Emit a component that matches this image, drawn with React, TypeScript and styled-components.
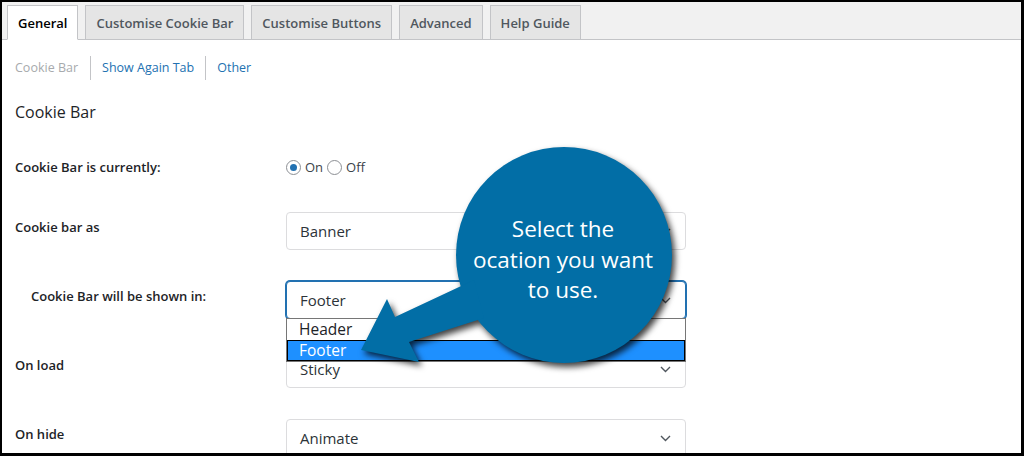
import React from "react";
import styled, { createGlobalStyle } from "styled-components";

const GlobalStyle = createGlobalStyle`
  html, body { margin: 0; padding: 0; background: #000; }
  body { font-family: "Open Sans", "Noto Sans", sans-serif; }
  * { box-sizing: border-box; }
`;

const Frame = styled.div`
  position: relative;
  width: 1024px;
  height: 456px;
  overflow: hidden;
  background: #fff;
  border-style: solid;
  border-color: #000;
  border-width: 2px 3px 3px 2px;
`;

const TabBar = styled.div`
  display: flex;
  align-items: flex-end;
  gap: 7px;
  height: 38px;
  padding-left: 5px;
  background: #f1f1f1;
  border-bottom: 1px solid #c3c4c7;
`;

const Tab = styled.div<{ $active?: boolean }>`
  height: 35px;
  margin-bottom: -1px;
  padding: 0 10px;
  display: flex;
  align-items: center;
  font-size: 13px;
  font-weight: 600;
  color: ${(p) => (p.$active ? "#000" : "#50575e")};
  background: ${(p) => (p.$active ? "#fff" : "#e5e5e5")};
  border: 1px solid #c3c4c7;
  border-bottom: 1px solid ${(p) => (p.$active ? "#fff" : "#c3c4c7")};
`;

const Content = styled.div`
  padding-left: 13px;
`;

const SubNav = styled.div`
  display: flex;
  align-items: center;
  margin-top: 16px;
  height: 24px;
  font-size: 12.5px;
`;

const SubLink = styled.span<{ $current?: boolean }>`
  color: ${(p) => (p.$current ? "#a7aaad" : "#2271b1")};
  padding: 0 11px;
  line-height: 24px;
  border-left: 1px solid #c3c4c7;
  &:first-child { padding-left: 0; padding-right: 12px; border-left: none; }
`;

const Heading = styled.h2`
  margin: 20px 0 13px;
  font-size: 16px;
  line-height: 24px;
  font-weight: 500;
  color: #1d2327;
`;

const Row = styled.div<{ $compact?: boolean }>`
  display: grid;
  grid-template-columns: 271px 400px;
  padding: ${(p) => (p.$compact ? "15px 0 15px" : "15px 0 16px")};
`;

const Label = styled.div<{ $indent?: boolean }>`
  padding-top: 5px;
  padding-left: ${(p) => (p.$indent ? "16px" : "0")};
  font-size: 13px;
  line-height: 20px;
  font-weight: 600;
  color: #1d2327;
`;

const RadioGroup = styled.div`
  display: flex;
  align-items: center;
  height: 30px;
  font-size: 13px;
  color: #3c434a;
`;

const RadioCircle = styled.span<{ $checked?: boolean }>`
  width: 15px;
  height: 15px;
  border-radius: 50%;
  border: 1px solid #8c8f94;
  display: inline-flex;
  align-items: center;
  justify-content: center;
  margin-right: 4px;
  &::after {
    content: "";
    width: 7px;
    height: 7px;
    border-radius: 50%;
    background: ${(p) => (p.$checked ? "#2271b1" : "transparent")};
  }
`;

const RadioText = styled.span`
  margin-right: 4px;
`;

const SelectBox = styled.div<{ $focused?: boolean }>`
  position: relative;
  height: 38px;
  display: flex;
  align-items: center;
  justify-content: space-between;
  padding: 0 14px 0 13px;
  font-size: 15px;
  color: #2c3338;
  background: #fff;
  border-radius: 4px;
  border: 1px solid ${(p) => (p.$focused ? "#2271b1" : "#dcdcde")};
  box-shadow: ${(p) => (p.$focused ? "0 0 0 1px #2271b1" : "none")};
`;

const Chevron = () => (
  <svg width="11" height="7" viewBox="0 0 11 7" fill="none">
    <path d="M1 1l4.5 4.5L10 1" stroke="#50575e" strokeWidth="1.4" />
  </svg>
);

const DropList = styled.div`
  position: absolute;
  left: 284px;
  top: 316px;
  width: 400px;
  background: #fff;
  border: 1px solid #767676;
  z-index: 2;
`;

const Option = styled.div<{ $selected?: boolean }>`
  height: 21px;
  font-size: 15.5px;
  color: ${(p) => (p.$selected ? "#fff" : "#1d2327")};
  background: ${(p) => (p.$selected ? "#1e90ff" : "#fff")};
  outline: ${(p) => (p.$selected ? "1px dotted #000" : "none")};
  outline-offset: -1px;
  border: ${(p) => (p.$selected ? "1px solid #000" : "none")};
  line-height: ${(p) => (p.$selected ? "19px" : "21px")};
  padding-left: ${(p) => (p.$selected ? "11px" : "12px")};
`;

const CalloutLayer = styled.div`
  position: absolute;
  left: 0;
  top: 0;
  width: 1024px;
  height: 456px;
  pointer-events: none;
  z-index: 3;
`;

const CalloutArt = styled.svg`
  position: absolute;
  left: 0;
  top: 0;
  filter: drop-shadow(3px 4px 3px rgba(0, 0, 0, 0.75));
`;

const BubbleText = styled.div`
  position: absolute;
  left: 441px;
  top: 212px;
  width: 240px;
  text-align: center;
  color: #fff;
  font-family: "Open Sans", "Noto Sans", sans-serif;
  font-size: 22.5px;
  line-height: 30.5px;
`;

export default function App() {
  return (
    <>
      <GlobalStyle />
      <Frame>
        <TabBar>
          <Tab $active>General</Tab>
          <Tab>Customise Cookie Bar</Tab>
          <Tab>Customise Buttons</Tab>
          <Tab>Advanced</Tab>
          <Tab>Help Guide</Tab>
        </TabBar>
        <Content>
          <SubNav>
            <SubLink $current>Cookie Bar</SubLink>
            <SubLink>Show Again Tab</SubLink>
            <SubLink>Other</SubLink>
          </SubNav>
          <Heading>Cookie Bar</Heading>
          <Row $compact>
            <Label>Cookie Bar is currently:</Label>
            <RadioGroup>
              <RadioCircle $checked />
              <RadioText>On</RadioText>
              <RadioCircle />
              <RadioText>Off</RadioText>
            </RadioGroup>
          </Row>
          <Row>
            <Label>Cookie bar as</Label>
            <SelectBox>
              <span>Banner</span>
              <Chevron />
            </SelectBox>
          </Row>
          <Row>
            <Label $indent>Cookie Bar will be shown in:</Label>
            <SelectBox $focused>
              <span>Footer</span>
              <Chevron />
            </SelectBox>
          </Row>
          <Row>
            <Label>On load</Label>
            <SelectBox>
              <span>Sticky</span>
              <Chevron />
            </SelectBox>
          </Row>
          <Row>
            <Label>On hide</Label>
            <SelectBox>
              <span>Animate</span>
              <Chevron />
            </SelectBox>
          </Row>
        </Content>
        <DropList>
          <Option>Header</Option>
          <Option $selected>Footer</Option>
        </DropList>
        <CalloutLayer>
          <CalloutArt width="1024" height="456" viewBox="0 0 1024 456">
            <g fill="#026ea6">
              <circle cx="562" cy="253" r="108" />
              <polygon points="472,278 393,315 385,297 359,348 417,360 407,340 482,316" />
            </g>
          </CalloutArt>
          <BubbleText>
            Select the
            <br />
            ocation you want
            <br />
            to use.
          </BubbleText>
        </CalloutLayer>
      </Frame>
    </>
  );
}
